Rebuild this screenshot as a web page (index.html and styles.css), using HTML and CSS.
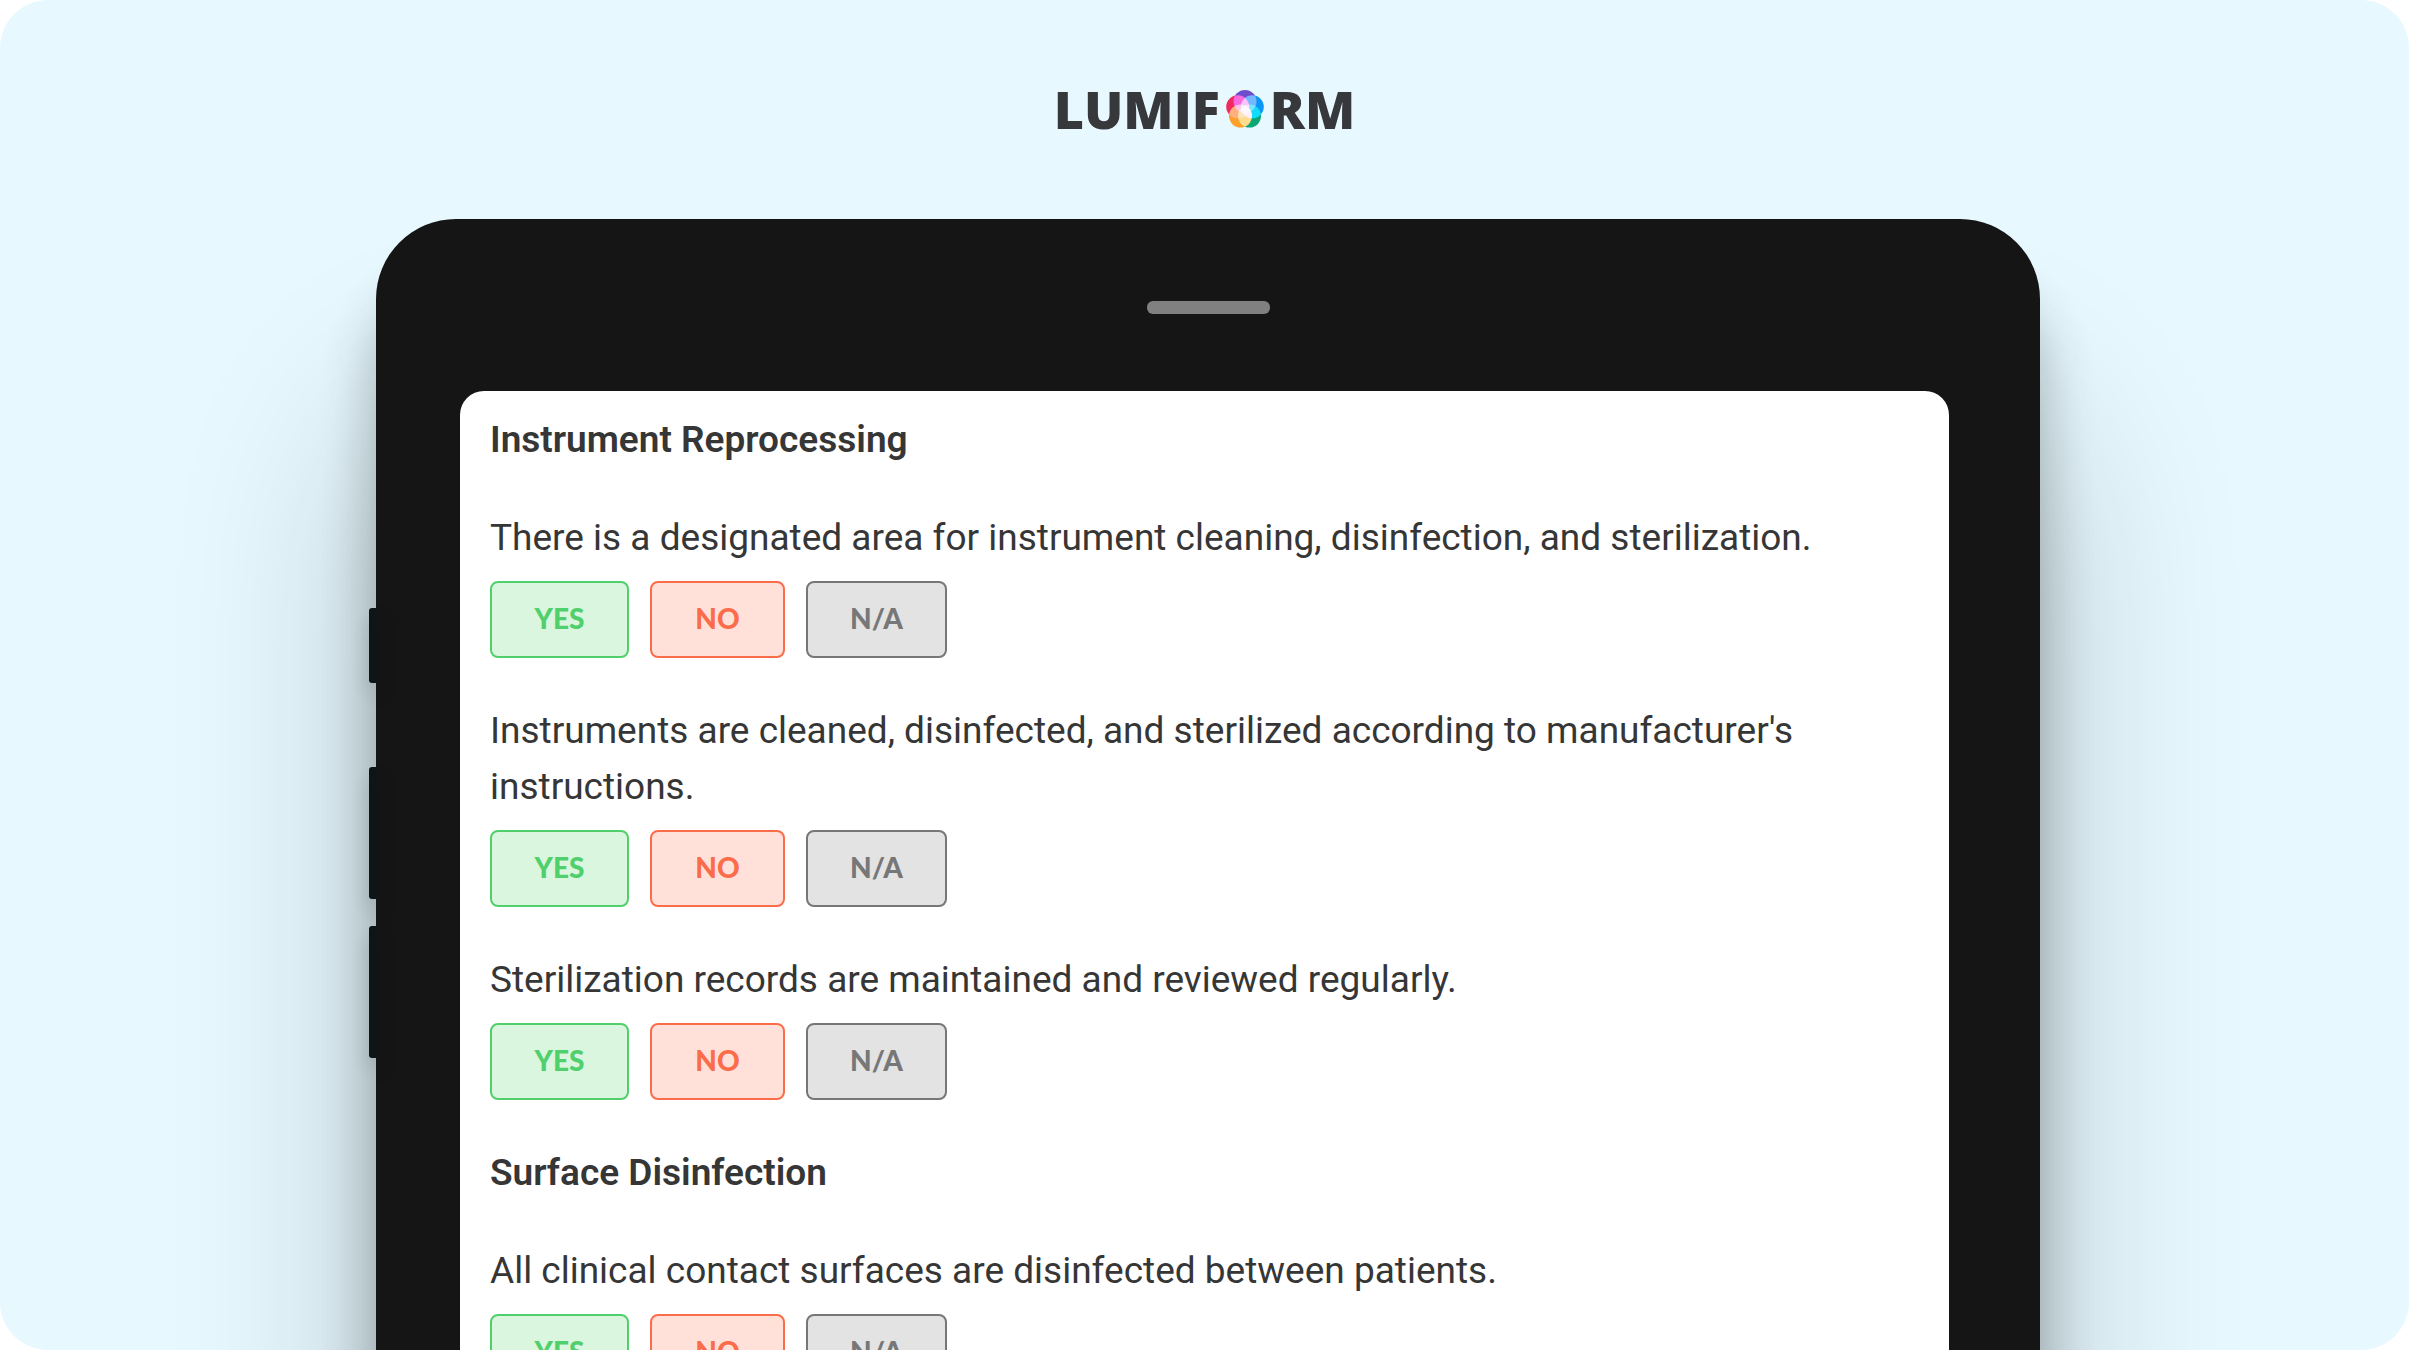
FILE: index.html
```html
<!DOCTYPE html>
<html lang="en">
<head>
    <meta charset="UTF-8">
    <meta name="viewport" content="width=device-width, initial-scale=1.0">
    <title>Lumiform - Infection Control Checklist</title>
    <link rel="stylesheet" href="styles.css">
</head>
<body>

<div class="stage">
    <header class="logo">
        <span>LUMIF</span>
        <svg class="gem" viewBox="0 0 38 38" aria-hidden="true">
            <g class="petals">
                <circle cx="19" cy="11.5" r="11.5" fill="#6f4ccb"/>
                <circle cx="26.3" cy="16.8" r="11.5" fill="#0a97f5"/>
                <circle cx="23.5" cy="26" r="11.5" fill="#0aa676"/>
                <circle cx="14.5" cy="26" r="11.5" fill="#ff9f2c"/>
                <circle cx="11.7" cy="16.8" r="11.5" fill="#f02a60"/>
            </g>
        </svg>
        <span>RM</span>
    </header>

    <div class="device">
        <div class="side-buttons">
            <span class="side-button short"></span>
            <span class="side-button"></span>
            <span class="side-button"></span>
        </div>

        <div class="tablet">
            <div class="bezel"><span class="speaker"></span></div>

            <main class="screen">
                <h2>Instrument Reprocessing</h2>

                <div class="question">
                    <p>There is a designated area for instrument cleaning, disinfection, and sterilization.</p>
                    <div class="answers">
                        <button type="button" class="yes">YES</button>
                        <button type="button" class="no">NO</button>
                        <button type="button" class="na">N/A</button>
                    </div>
                </div>

                <div class="question">
                    <p>Instruments are cleaned, disinfected, and sterilized according to manufacturer's instructions.</p>
                    <div class="answers">
                        <button type="button" class="yes">YES</button>
                        <button type="button" class="no">NO</button>
                        <button type="button" class="na">N/A</button>
                    </div>
                </div>

                <div class="question">
                    <p>Sterilization records are maintained and reviewed regularly.</p>
                    <div class="answers">
                        <button type="button" class="yes">YES</button>
                        <button type="button" class="no">NO</button>
                        <button type="button" class="na">N/A</button>
                    </div>
                </div>

                <h2>Surface Disinfection</h2>

                <div class="question">
                    <p>All clinical contact surfaces are disinfected between patients.</p>
                    <div class="answers">
                        <button type="button" class="yes">YES</button>
                        <button type="button" class="no">NO</button>
                        <button type="button" class="na">N/A</button>
                    </div>
                </div>
            </main>
        </div>
    </div>
</div>

</body>
</html>
```
FILE: styles.css
```css
* {
    box-sizing: border-box;
}
body {
    margin: 0;
    background-color: #fff;
    color: #363636;
    font-family: Roboto, Arial, sans-serif;
}
.stage {
    height: 100vh;
    overflow: hidden;
    background-color: #e7f9ff;
    border-radius: 48px;
}
.logo {
    display: flex;
    justify-content: center;
    align-items: center;
    gap: 6px;
    padding: 79px 0 80px;
    color: #36383b;
    font-family: "Open Sans", sans-serif;
    font-size: 52px;
    font-weight: 800;
    line-height: 60px;
}
.gem {
    width: 38px;
    height: 38px;
}
.petals {
    isolation: isolate;
}
.petals circle {
    mix-blend-mode: screen;
}

/* tablet */
.device {
    position: relative;
    max-width: 1671px;
    margin: 0 auto;
    padding-left: 7px;
}
.tablet {
    background-color: #151515;
    border-radius: 80px 80px 0 0;
    box-shadow: 0 70px 60px rgba(0, 0, 0, 0.28), 0 200px 200px rgba(0, 0, 0, 0.24);
}
.bezel {
    display: flex;
    justify-content: center;
    height: 172px;
    padding-top: 82px;
}
.speaker {
    width: 123px;
    height: 13px;
    background-color: #808080;
    border-radius: 6px;
}
.side-buttons {
    position: absolute;
    top: 389px;
    left: 0;
    display: flex;
    flex-direction: column;
}
.side-button {
    width: 8px;
    height: 132px;
    margin-bottom: 27px;
    background-color: #0f1416;
    border-radius: 3px 0 0 3px;
    box-shadow: 0 12px 20px rgba(0, 0, 0, 0.2);
}
.side-button.short {
    height: 75px;
    margin-bottom: 84px;
}

/* checklist */
.screen {
    margin: 0 91px 0 84px;
    padding: 21px 30px 600px;
    background-color: #fff;
    border-radius: 24px 24px 0 0;
}
h2,
p {
    margin: 0;
    font-size: 37px;
    line-height: 56px;
}
h2 {
    margin-bottom: 42px;
    font-weight: 600;
}
.question {
    margin-bottom: 45px;
}
.answers {
    display: flex;
    gap: 21px;
    margin-top: 15px;
}
button {
    height: 77px;
    padding: 0 0 3px;
    border: 2px solid;
    border-radius: 8px;
    font-family: Lato, sans-serif;
    font-size: 28px;
    font-weight: 900;
    cursor: pointer;
}
.yes {
    width: 139px;
    background-color: #dbf6df;
    color: #4fd06c;
}
.no {
    width: 135px;
    background-color: #ffe1da;
    color: #fb6d4a;
}
.na {
    width: 141px;
    background-color: #e3e3e3;
    color: #777;
}
```
